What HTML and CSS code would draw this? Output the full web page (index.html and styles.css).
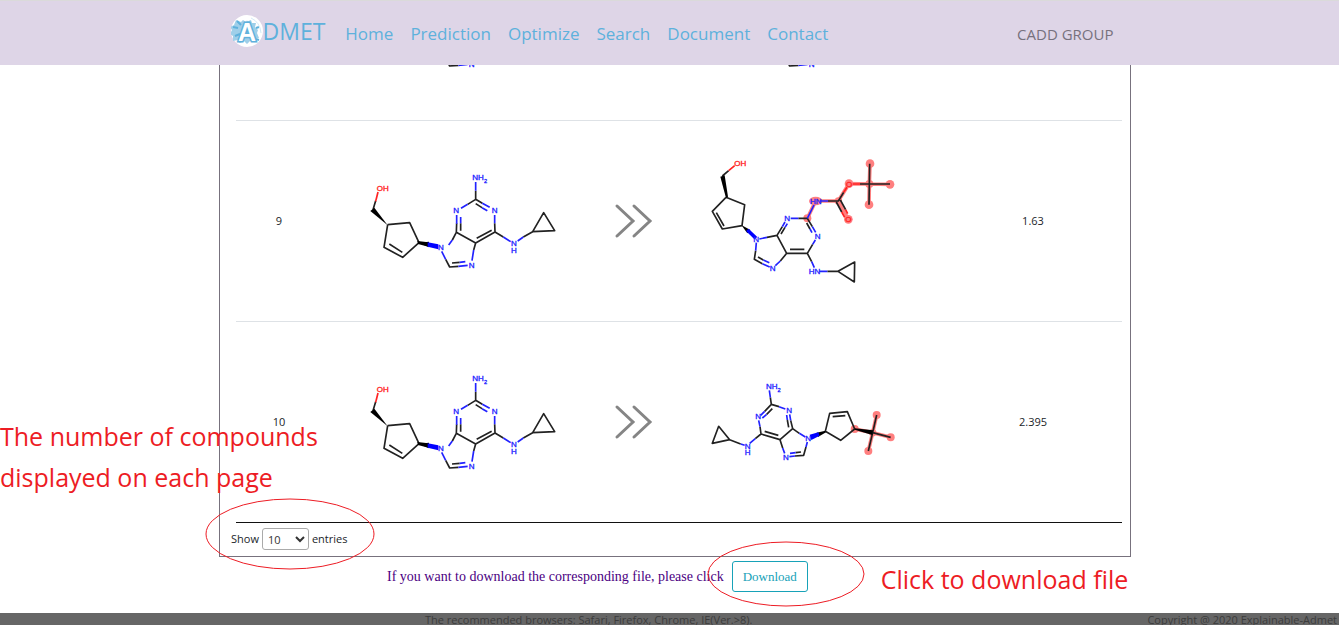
FILE: index.html
```
<!DOCTYPE html>
<html lang="en">
<head>
<meta charset="utf-8">
<title>ADMET</title>
<link rel="stylesheet" href="styles.css">
</head>
<body>
<svg class="defs" aria-hidden="true">
  <defs>
    <g id="source-molecule">
      <path class="bond" d="M39 149L47 122M83 194L149 188L177 248L128 292L72 262L83 194M88 252L127 277M289 217L290 190M302 212L302 190M323 133L347 118L367 130M347 92V118M347 131L366 143M404 190L405 216L347 249L289 217M395 211L350 235M289 217L277 240M347 249L341 270M257 298L269 321L295 319M276 309L299 307M405 216L430 231M490 231L518 215M518 215L551 158L584 212Z"/>
      <path class="bond blue" d="M347 66V92M290 165V191M302 171V190M303 145L323 133M404 165V190M389 142L367 130M382 152L366 143M277 240L266 255M341 270L336 302M257 298L245 274M295 319L323 316M299 307L316 305M430 231L452 245M473 243L490 231"/>
      <path class="bond red" d="M47 124L54 96"/>
      <path d="M83 196L31 153L43 143Z"/>
      <path d="M177 248L207 245V262Z"/>
      <path d="M172 243L205 247V260L174 252Z"/>
      <path class="blue-fill" d="M203 247L235 253V268L203 260Z"/>
      <text class="atom oxygen" x="50" y="93">OH</text>
      <text class="atom" x="337" y="60">NH<tspan class="sub" dy="8">2</tspan></text>
      <text class="atom" x="280" y="160">N</text>
      <text class="atom" x="395" y="160">N</text>
      <text class="atom" x="234" y="271">N</text>
      <text class="atom" x="326" y="324">N</text>
      <text class="atom" x="453" y="257">N</text>
      <text class="atom" x="453" y="279">H</text>
    </g>
    <path id="chevrons" d="M3 3L19 18L3 33M20 3L36 18L20 33"/>
  </defs>
</svg>

<header class="site-header">
  <div class="header-inner">
    <a class="brand" href="#">
      <svg class="logo" viewBox="0 0 32 32" aria-hidden="true">
        <circle cx="16" cy="16" r="16" fill="#fff"/>
        <path fill="#9fcfe9" d="M5 5l5 2 2-2 3 2 5-2 1 3 4 0-1 4 3 3-1 3 2 5-4 0 0 4-5-1-3 3-3-3-4 2-2-3-5 1 0-5-3-2 2-4-2-3 4-2z"/>
        <path fill="none" stroke="#5eb1dc" stroke-width="2" d="M2 12l5 1M4 21l5-2M8 27l2-4M6 6l4 4M25 24l3 1M25 13l3-1"/>
        <path fill="none" stroke="#d4eaf6" d="M20 3Q29 7 30 18"/>
        <text class="logo-letter" x="16" y="26" text-anchor="middle">A</text>
      </svg>
      <span>DMET</span>
    </a>
    <nav class="nav">
      <a href="#">Home</a>
      <a href="#">Prediction</a>
      <a href="#">Optimize</a>
      <a href="#">Search</a>
      <a href="#">Document</a>
      <a href="#">Contact</a>
    </nav>
    <a class="group" href="#">CADD GROUP</a>
  </div>
</header>

<main class="main">
  <section class="panel">
    <table class="results">
      <colgroup><col class="c-index"><col class="c-mol"><col class="c-arrow"><col class="c-mol"><col class="c-score"></colgroup>
      <tbody>
        <tr>
          <td></td>
          <td><svg class="mol-end" viewBox="9 318 600 165"><use href="#source-molecule"/></svg></td>
          <td></td>
          <td><svg class="mol-end" viewBox="9 318 600 165"><use href="#source-molecule"/></svg></td>
          <td></td>
        </tr>
        <tr>
          <td>9</td>
          <td><svg class="mol" viewBox="9 -117 600 600"><use href="#source-molecule"/></svg></td>
          <td><svg class="chevrons" viewBox="0 0 39 36"><use href="#chevrons"/></svg></td>
          <td>
            <svg class="mol" viewBox="9 -87 600 600">
              <g class="halo">
                <path d="M322 205L347 153L415 153L447 101L508 102M508 102L510 41M508 102L570 103M508 102L507 164M415 153L445 208"/>
                <ellipse cx="347" cy="153" rx="20" ry="13"/>
                <circle cx="322" cy="205" r="12"/><circle cx="415" cy="153" r="11"/><circle cx="447" cy="101" r="13"/><circle cx="508" cy="102" r="12"/><circle cx="510" cy="41" r="13"/><circle cx="570" cy="103" r="13"/><circle cx="507" cy="164" r="13"/><circle cx="445" cy="208" r="13"/>
              </g>
              <path class="bond" d="M67 78L86 62M78 142L134 164L126 227L67 237L37 184L78 142M49 188L72 228M201 262L231 256L260 310L322 310L338 283M231 256L247 230M243 252L255 232M295 205H322L337 230M320 219L330 237M270 298H313M260 310L241 333M167 302L163 328L187 341M174 321L190 330M322 310L335 335M382 364H414L464 336L463 396L414 364M384 153H415L431 127M409 156L425 186M421 150L437 179M480 102H570M509 41L507 164"/>
              <path class="bond blue" d="M201 262L178 267M247 230L255 216M255 232L262 221M295 205H272M337 230L347 247M330 237L336 248M338 283L346 270M241 333L226 347M167 302L169 278M187 341L209 351M190 330L208 338M335 335L343 353M382 364H358M322 205L342 165M384 153H359"/>
              <path class="bond red" d="M86 62L104 47M431 127L441 112M480 102H458M425 186L434 202M437 179L443 191"/>
              <path d="M78 144L61 80L74 76L84 140Z"/><path d="M124 225L151 240L142 250Z"/>
              <path class="blue-fill" d="M146 236L172 261L163 268L138 243Z"/>
              <text class="atom oxygen" x="103" y="48">OH</text>
              <text class="atom" x="330" y="161">HN</text><text class="atom oxygen" x="438" y="110">O</text><text class="atom oxygen" x="436" y="217">O</text>
              <text class="atom" x="253" y="213">N</text><text class="atom" x="344" y="267">N</text><text class="atom" x="160" y="276">N</text><text class="atom" x="209" y="363">N</text><text class="atom" x="326" y="373">HN</text>
            </svg>
          </td>
          <td>1.63</td>
        </tr>
        <tr>
          <td>10</td>
          <td><svg class="mol" viewBox="9 -117 600 600"><use href="#source-molecule"/></svg></td>
          <td><svg class="chevrons" viewBox="0 0 39 36"><use href="#chevrons"/></svg></td>
          <td>
            <svg class="mol" viewBox="9 -144 600 600">
              <g class="halo">
                <path d="M464 177L518 188M530 135L518 188L505 243M518 188L572 202"/>
                <circle cx="464" cy="177" r="12"/><circle cx="518" cy="188" r="11"/><circle cx="530" cy="135" r="12"/><circle cx="572" cy="202" r="12"/><circle cx="505" cy="243" r="12"/>
              </g>
              <path class="bond" d="M211 82L214 103L237 110M214 103L194 124M217 116L200 133M183 192L180 170M183 192L240 209L278 176L272 151M194 184L235 196M266 172L262 150M183 192L166 206M122 222L89 209L56 169L37 220L89 209M240 209L248 234M278 176L298 190M318 231L311 256L285 258M303 246L287 248M376 184L389 130L442 125L464 177L422 211L376 184M398 140L436 137M530 135L518 188L505 243M518 188L572 202"/>
              <path class="bond blue" d="M208 61L211 82M237 110L256 117M194 124L182 136M200 133L187 144M180 170L176 151M272 151L269 133M262 150L260 135M166 206L149 220M122 222L134 226M248 234L254 250M298 190L316 201M318 231L322 216M285 258L268 260M287 248L270 250"/>
              <path d="M376 182L350 188L354 201L378 187Z"/><path class="blue-fill" d="M355 187L329 194L334 210L359 197Z"/>
              <path d="M464 175L519 181L517 195L464 179Z"/>
              <text class="atom" x="198" y="58">NH<tspan class="sub" dy="8">2</tspan></text>
              <text class="atom" x="166" y="148">N</text><text class="atom" x="259" y="130">N</text><text class="atom" x="316" y="213">N</text><text class="atom" x="249" y="270">N</text><text class="atom" x="134" y="236">N</text><text class="atom" x="134" y="256">H</text>
            </svg>
          </td>
          <td>2.395</td>
        </tr>
      </tbody>
    </table>
    <div class="length">
      <label for="length">Show</label>
      <select id="length"><option>10</option></select>
      <span>entries</span>
      <svg class="ring ring-length" viewBox="0 0 170 72" aria-hidden="true"><ellipse cx="85" cy="36" rx="84" ry="35"/></svg>
      <p class="note note-length">The number of compounds<br>displayed on each page</p>
    </div>
  </section>
  <div class="download">
    <span>If you want to download the corresponding file, please click</span>
    <div class="download-action">
      <button type="button">Download</button>
      <svg class="ring ring-download" viewBox="0 0 158 66" aria-hidden="true"><ellipse cx="79" cy="33" rx="78" ry="32"/></svg>
      <p class="note note-download">Click to download file</p>
    </div>
  </div>
</main>

<footer class="footer">
  <span>The recommended browsers: Safari, Firefox, Chrome, IE(Ver.&gt;8).</span>
  <span>Copyright @ 2020 Explainable-Admet</span>
</footer>
</body>
</html>
```
FILE: styles.css
```
* { box-sizing: border-box; }
body {
  margin: 0;
  height: 100vh;
  display: flex;
  flex-direction: column;
  background: #fff;
  color: #212529;
  font-family: "Open Sans", "Noto Sans", sans-serif;
  font-size: 11px;
  line-height: 14px;
}
a { text-decoration: none; }
p { margin: 0; }
.defs { position: absolute; width: 0; height: 0; }

.site-header {
  flex: none;
  height: 65px;
  background: #ded5e7;
  border-top: 1px solid #dadada;
}
.header-inner {
  max-width: 888px;
  height: 60px;
  margin: 0 auto;
  padding-left: 5px;
  display: flex;
  align-items: center;
}
.brand {
  display: flex;
  align-items: center;
  color: #5eb1dc;
  font-size: 23px;
  line-height: 32px;
}
.logo { width: 32px; height: 32px; }
.logo-letter {
  font: bold 25px "Liberation Sans", sans-serif;
  fill: #fff;
  stroke: #5eb1dc;
  stroke-width: 3px;
  paint-order: stroke;
}
.nav {
  display: flex;
  gap: 17px;
  margin-left: 20px;
  padding-top: 6px;
  font-size: 17px;
  line-height: 24px;
}
.nav a { color: #5eb1dc; }
.group {
  margin-left: auto;
  padding-top: 6px;
  color: #77717d;
  font-size: 15px;
  line-height: 20px;
}

.main {
  flex: 1;
  min-height: 0;
  width: 100%;
  max-width: 923px;
  margin: 0 auto;
  padding-left: 11px;
}
.panel {
  border: 1px solid #77717d;
  border-top: 0;
}
.results {
  width: calc(100% - 24px);
  margin-left: 16px;
  table-layout: fixed;
  border-collapse: separate;
  border-spacing: 0;
  border-bottom: 1px solid #111;
  text-align: center;
}
.c-index { width: 86px; }
.c-arrow { width: 58px; }
.c-score { width: 178px; }
.results td { padding: 0; vertical-align: middle; }
.results tr + tr td { border-top: 1px solid #dee2e6; }
.mol, .mol-end { display: block; width: 200px; margin: 0 auto; }
.mol { height: 200px; }
.mol-end { height: 55px; }
.chevrons {
  display: block;
  width: 39px;
  height: 36px;
  margin: 0 auto;
  fill: none;
  stroke: #858585;
  stroke-width: 3px;
  stroke-linecap: round;
}
.bond { fill: none; stroke: #222; stroke-width: 5px; stroke-linejoin: round; }
.blue { stroke: #22f; }
.red { stroke: #f22; }
.blue-fill { fill: #00f; }
.atom {
  font: 24px "Liberation Sans", sans-serif;
  fill: #22f;
  stroke: #22f;
  stroke-width: 1px;
}
.oxygen { fill: #f22; stroke: #f22; }
.sub { font-size: 17px; }
.halo { fill: #ff7f7f; }
.halo path { fill: none; stroke: #ff7f7f; stroke-width: 11px; }

.length {
  position: relative;
  display: flex;
  align-items: center;
  gap: 3px;
  padding: 5px 11px 6px;
}
.length select {
  width: 47px;
  height: 22px;
  padding: 0 1px;
  border: 1px solid #aaa;
  border-radius: 3px;
  background: transparent;
  color: #333;
  font: inherit;
}
.download {
  display: flex;
  align-items: center;
  gap: 8px;
  padding: 4px 0 0 168px;
  color: #4b0082;
  font-family: "Liberation Serif", serif;
  font-size: 14px;
}
.download-action { position: relative; }
.download button {
  display: block;
  height: 31px;
  padding: 0 10px;
  border: 1px solid #17a2b8;
  border-radius: 3px;
  background: transparent;
  color: #17a2b8;
  font: 13px "Liberation Serif", serif;
}

.ring {
  position: absolute;
  fill: none;
  stroke: #ed1c24;
  pointer-events: none;
}
.ring-length { left: -15px; top: -25px; width: 170px; height: 72px; }
.ring-download { left: -25px; top: -20px; width: 158px; height: 66px; }
.note {
  position: absolute;
  color: #ed1c24;
  font-family: "Open Sans", "Noto Sans", sans-serif;
  font-size: 25px;
  line-height: 41px;
  white-space: nowrap;
}
.note-length { left: -220px; top: -107px; }
.note-download { left: 149px; top: -2px; }

.footer {
  flex: none;
  height: 12px;
  padding: 0 2px 0 425px;
  display: flex;
  justify-content: space-between;
  overflow: hidden;
  background: #666;
  color: #3c3c3c;
  white-space: nowrap;
}
```
